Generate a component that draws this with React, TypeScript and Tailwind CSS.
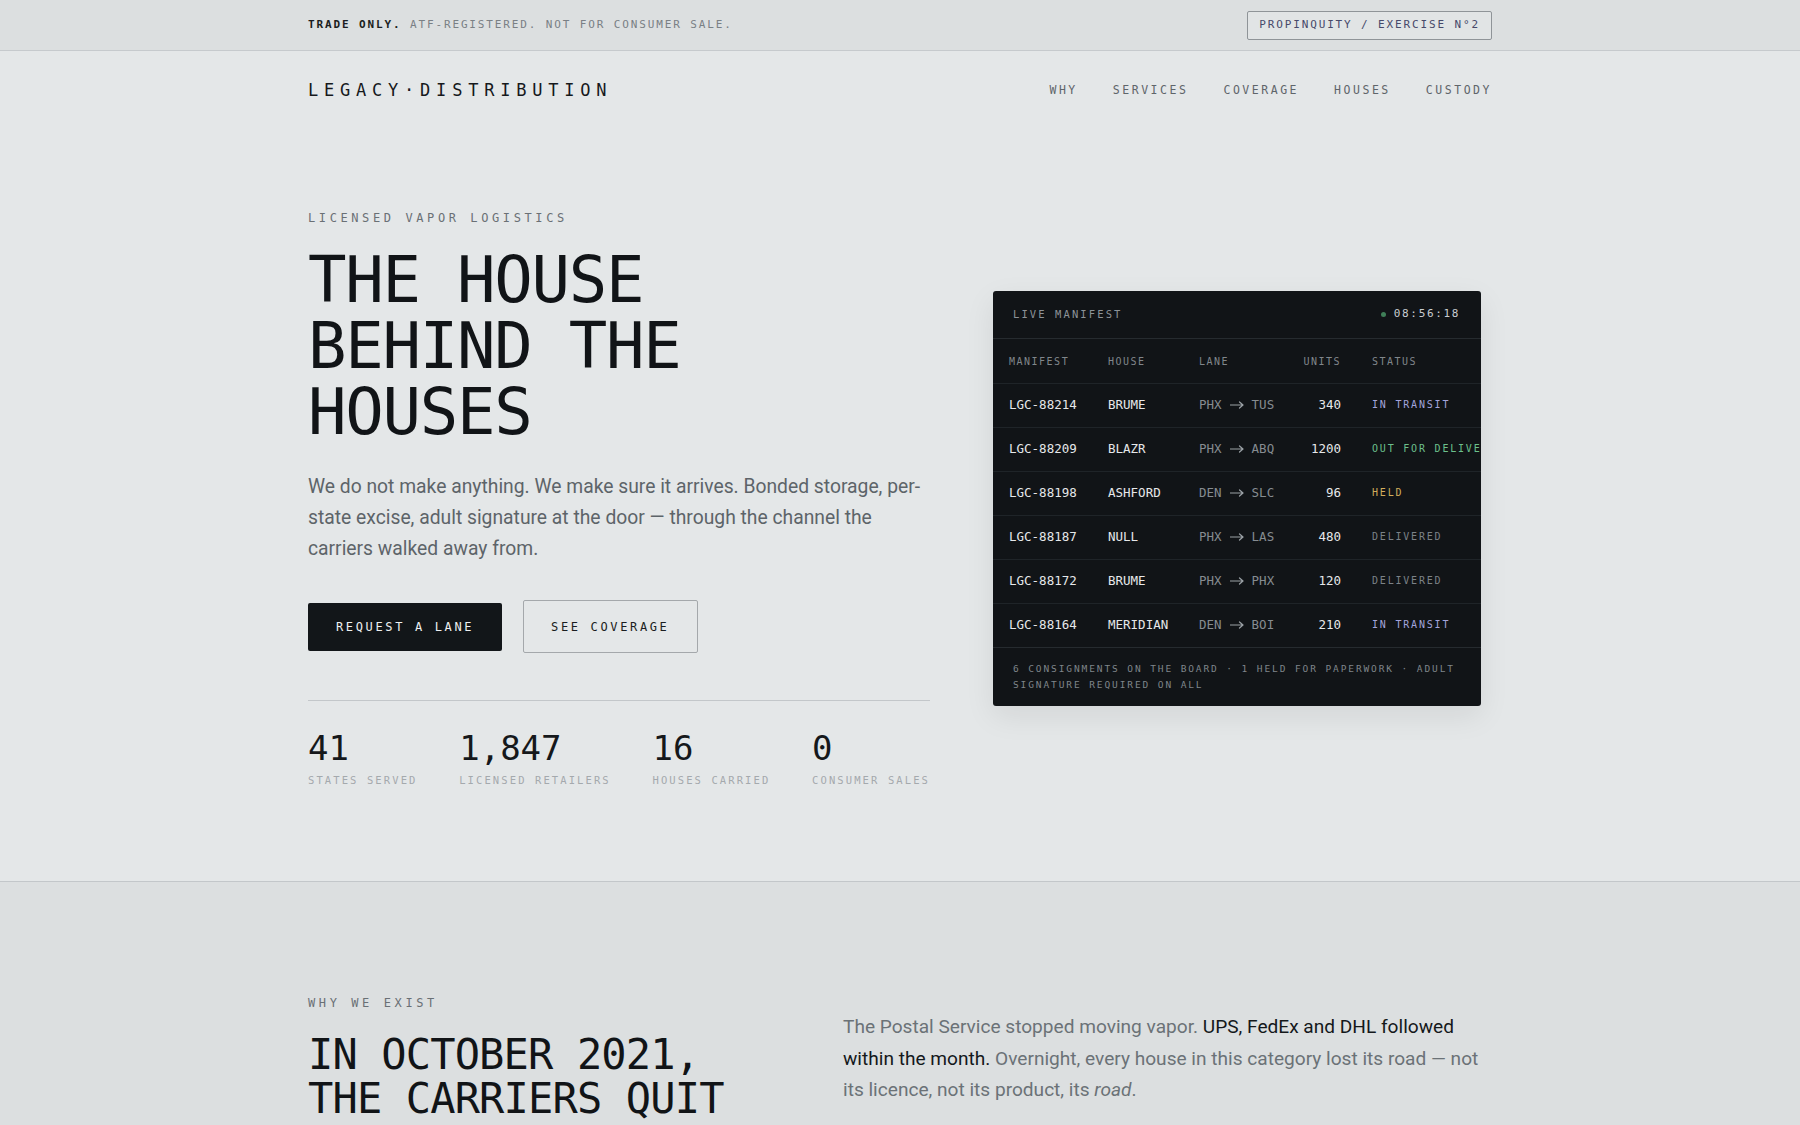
import { ReactNode } from "react";

const mono = "font-['DejaVu_Sans_Mono','Liberation_Mono',monospace]";
const sans = "font-['Roboto','Noto_Sans',sans-serif]";

type Tone = "transit" | "out" | "held" | "done";

const toneClass: Record<Tone, string> = {
  transit: "text-[#a3a4dc]",
  out: "text-[#6cc08c]",
  held: "text-[#d2ad5c]",
  done: "text-[#7c8287]",
};

const manifest: { id: string; house: string; from: string; to: string; units: string; status: string; tone: Tone }[] = [
  { id: "LGC-88214", house: "BRUME", from: "PHX", to: "TUS", units: "340", status: "IN TRANSIT", tone: "transit" },
  { id: "LGC-88209", house: "BLAZR", from: "PHX", to: "ABQ", units: "1200", status: "OUT FOR DELIVERED", tone: "out" },
  { id: "LGC-88198", house: "ASHFORD", from: "DEN", to: "SLC", units: "96", status: "HELD", tone: "held" },
  { id: "LGC-88187", house: "NULL", from: "PHX", to: "LAS", units: "480", status: "DELIVERED", tone: "done" },
  { id: "LGC-88172", house: "BRUME", from: "PHX", to: "PHX", units: "120", status: "DELIVERED", tone: "done" },
  { id: "LGC-88164", house: "MERIDIAN", from: "DEN", to: "BOI", units: "210", status: "IN TRANSIT", tone: "transit" },
];

const navLinks = ["WHY", "SERVICES", "COVERAGE", "HOUSES", "CUSTODY"];

const stats = [
  { value: "41", label: "STATES SERVED" },
  { value: "1,847", label: "LICENSED RETAILERS" },
  { value: "16", label: "HOUSES CARRIED" },
  { value: "0", label: "CONSUMER SALES" },
];

function Eyebrow({ children }: { children: ReactNode }) {
  return (
    <div className={`${mono} text-[12px] leading-[16px] tracking-[0.3em] text-[#6a7075]`}>
      {children}
    </div>
  );
}

// long thin arrow used in the lane column
function LaneArrow() {
  return (
    <svg width="14" height="8" viewBox="0 0 14 8" className="inline-block mx-[8px] -mt-[2px]" fill="none">
      <path d="M0 4h13M9.5 1l3.5 3-3.5 3" stroke="#9ba1a6" strokeWidth="1.2" strokeLinecap="round" strokeLinejoin="round" />
    </svg>
  );
}

function ManifestCard() {
  const cols = "grid grid-cols-[99px_91px_88px_54px_1fr] px-[16px] items-center whitespace-nowrap";
  return (
    <div className={`${mono} w-[488px] mr-[11px] bg-[#111417] rounded-[3px] overflow-hidden shadow-[0_10px_30px_rgba(0,0,0,0.08)]`}>
      <div className="h-[48px] px-[20px] pr-[21px] flex items-center justify-between border-b border-[#262b2f]">
        <span className="text-[10.5px] tracking-[0.2em] text-[#8d9398]">LIVE MANIFEST</span>
        <span className="flex items-center gap-[8px] text-[11px] tracking-[0.15em] text-[#c9cdd1]">
          <span className="w-[5px] h-[5px] rounded-full bg-[#3f7f58]" />
          08:56:18
        </span>
      </div>

      <div className={`${cols} h-[44px] text-[10px] tracking-[0.15em] text-[#80868b]`}>
        <span>MANIFEST</span>
        <span>HOUSE</span>
        <span>LANE</span>
        <span className="text-right">UNITS</span>
        <span className="pl-[31px]">STATUS</span>
      </div>

      {manifest.map((row) => (
        <div key={row.id} className={`${cols} h-[44px] border-t border-[#1f2428] text-[12.5px]`}>
          <span className="text-[#e6e8ea]">{row.id}</span>
          <span className="text-[#e6e8ea]">{row.house}</span>
          <span className="text-[#868c91] flex items-center">
            {row.from}
            <LaneArrow />
            {row.to}
          </span>
          <span className="text-right text-[#e6e8ea]">{row.units}</span>
          <span className={`pl-[31px] text-[10px] tracking-[0.18em] -mt-[2px] ${toneClass[row.tone]}`}>
            {row.status}
          </span>
        </div>
      ))}

      <div className="border-t border-[#262b2f] px-[20px] pt-[13px] pb-[13px] text-[9.5px] leading-[16px] tracking-[0.2em] text-[#7f858a]">
        6 CONSIGNMENTS ON THE BOARD · 1 HELD FOR PAPERWORK · ADULT SIGNATURE REQUIRED ON ALL
      </div>
    </div>
  );
}

export default function App() {
  return (
    <div className="min-h-screen bg-[#e4e7e8] text-[#121518]">
      {/* trade notice */}
      <div className="bg-[#dcdfe0] border-b border-[#c6cacd]">
        <div className={`${mono} max-w-[1184px] mx-auto h-[50px] flex items-center justify-between text-[11px] tracking-[0.17em]`}>
          <p>
            <span className="text-[#1b1e21] font-semibold">TRADE ONLY.</span>{" "}
            <span className="text-[#7a8085]">ATF-REGISTERED. NOT FOR CONSUMER SALE.</span>
          </p>
          <span className="h-[29px] px-[11px] flex items-center border border-[#8f9498] rounded-[2px] text-[#47496a] bg-[#e1e4e5]">
            PROPINQUITY / EXERCISE N°2
          </span>
        </div>
      </div>

      {/* nav */}
      <header className="max-w-[1184px] mx-auto h-[80px] flex items-center justify-between">
        <div className={`${mono} text-[17px] tracking-[0.34em] text-[#16191c]`}>LEGACY·DISTRIBUTION</div>
        <nav className={`${mono} flex items-center gap-[35px] text-[11.5px] tracking-[0.22em] text-[#5f656a]`}>
          {navLinks.map((l) => (
            <a key={l} href="#" className="hover:text-[#121518]">
              {l}
            </a>
          ))}
        </nav>
      </header>

      {/* hero */}
      <section className="border-b border-[#c3c7ca]">
        <div className="max-w-[1184px] mx-auto pt-[79px] pb-[94px] flex items-center justify-between">
          <div className="w-[622px]">
            <Eyebrow>LICENSED VAPOR LOGISTICS</Eyebrow>
            <h1 className={`${mono} mt-[21px] text-[64px] leading-[66px] tracking-[-0.02em] text-[#111417]`}>
              THE HOUSE
              <br />
              BEHIND THE
              <br />
              HOUSES
            </h1>
            <p className={`${sans} mt-[26px] text-[19.3px] leading-[31px] text-[#5d6469]`}>
              We do not make anything. We make sure it arrives. Bonded storage, per-state excise, adult signature at the
              door — through the channel the carriers walked away from.
            </p>

            <div className={`${mono} mt-[36px] flex items-center gap-[21px] text-[12px] tracking-[0.22em]`}>
              <button className="h-[48px] px-[28px] bg-[#121619] text-[#eef0f1] rounded-[2px]">REQUEST A LANE</button>
              <button className="h-[53px] px-[27px] border-[1.5px] border-[#a4a8ab] text-[#1a1d20] rounded-[2px]">
                SEE COVERAGE
              </button>
            </div>

            <div className="mt-[47px] border-t border-[#c3c7ca] pt-[27px] flex justify-between">
              {stats.map((s) => (
                <div key={s.label} className={mono}>
                  <div className="text-[34px] leading-[40px] text-[#15181b]">{s.value}</div>
                  <div className="mt-[5px] text-[10.5px] leading-[14px] tracking-[0.2em] text-[#a4a9ad]">{s.label}</div>
                </div>
              ))}
            </div>
          </div>

          <ManifestCard />
        </div>
      </section>

      {/* why */}
      <section className="bg-[#dcdfe0]">
        <div className="max-w-[1184px] mx-auto pt-[113px] pb-[120px] grid grid-cols-[471px_1fr] gap-[64px]">
          <div>
            <Eyebrow>WHY WE EXIST</Eyebrow>
            <h2 className={`${mono} mt-[22px] text-[42px] leading-[44px] tracking-[-0.02em] text-[#111417]`}>
              IN OCTOBER 2021,
              <br />
              THE CARRIERS QUIT
            </h2>
          </div>
          <p className={`${sans} pt-[16px] text-[19.1px] leading-[31.5px] text-[#6b7277]`}>
            The Postal Service stopped moving vapor.{" "}
            <span className="text-[#14181b]">UPS, FedEx and DHL followed within the month.</span> Overnight, every
            house in this category lost its road — not its licence, not its product, its <em>road</em>.
          </p>
        </div>
      </section>
    </div>
  );
}
